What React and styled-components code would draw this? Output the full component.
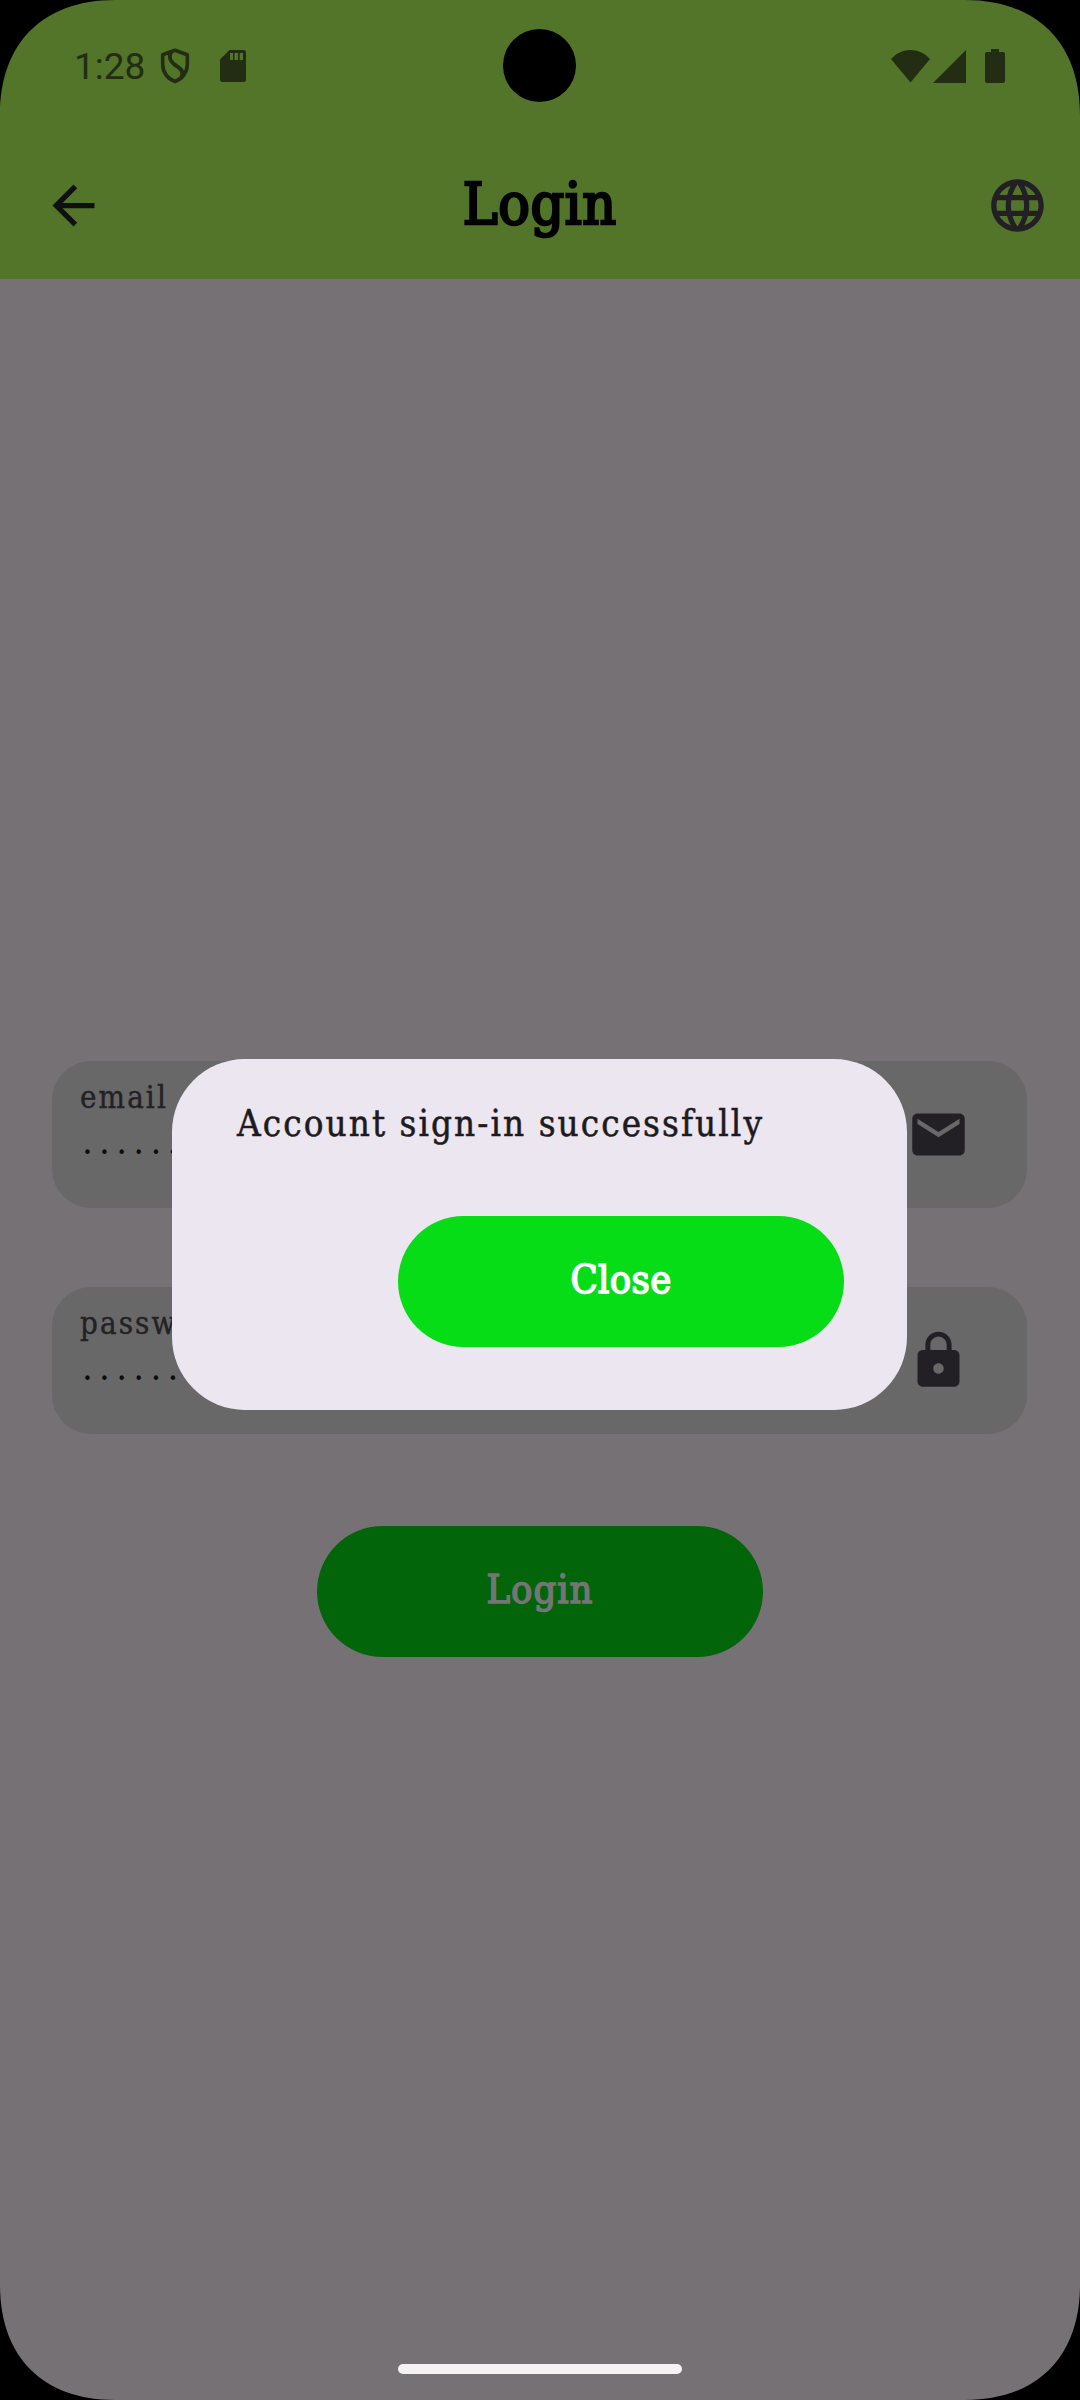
import React from "react";
import styled, { createGlobalStyle } from "styled-components";

const slab = `"DejaVu Serif Condensed", "DejaVu Serif", serif`;

const GlobalStyle = createGlobalStyle`
  * { box-sizing: border-box; }
  html, body { margin: 0; padding: 0; background: #000; }
`;

const Phone = styled.div`
  position: relative;
  display: flex;
  flex-direction: column;
  width: 1080px;
  height: 2400px;
  overflow: hidden;
  background: #767175;
  font-family: ${slab};
  font-stretch: condensed;
`;

const TopArea = styled.header`
  display: flex;
  flex-direction: column;
  height: 279px;
  background: #527529;
`;

const StatusBar = styled.div`
  display: flex;
  align-items: center;
  justify-content: space-between;
  height: 132px;
  padding: 0 75px 0 74px;
`;

const StatusGroup = styled.div`
  display: flex;
  align-items: center;
`;

const Clock = styled.span`
  width: 86px;
  padding-top: 1px;
  font: 400 37px/44px Roboto, sans-serif;
  color: #232d13;
`;

const Glyph = styled.svg`
  display: block;
  flex: none;
  width: ${(p) => p.$w}px;
  height: ${(p) => p.$h}px;
  margin-left: ${(p) => p.$gap || 0}px;
  fill: ${(p) => p.$color || "#232d13"};
`;

const Camera = styled.div`
  position: absolute;
  left: 503px;
  top: 29px;
  width: 73px;
  height: 73px;
  border-radius: 50%;
  background: #000;
`;

const AppBar = styled.div`
  display: grid;
  grid-template-columns: 63px 1fr 63px;
  align-items: center;
  height: 147px;
  padding: 0 31.5px 0 42px;
`;

const Title = styled.h1`
  margin: 0;
  padding: 0 11px 4px 0;
  text-align: center;
  font-size: 58.5px;
  line-height: 72px;
  font-weight: 400;
  letter-spacing: 0.6px;
  color: #000;
  -webkit-text-stroke: 2.6px #000;
`;

const Form = styled.main`
  display: flex;
  flex-direction: column;
  align-items: center;
  padding-top: 782px;
`;

const Field = styled.div`
  display: flex;
  justify-content: space-between;
  align-items: center;
  width: 975px;
  height: 147px;
  margin: 0 1px 79px 0;
  padding: 0 57.5px 0 28px;
  border-radius: 39px;
  background: #686868;
`;

const FieldText = styled.div`
  display: flex;
  flex-direction: column;
  height: 147px;
  padding-top: 16px;
`;

const Label = styled.label`
  font-size: 31px;
  line-height: 40px;
  letter-spacing: 2.1px;
  color: #232126;
  -webkit-text-stroke: 0.4px #232126;
`;

const Hidden = styled.span`
  margin-top: 20px;
  padding-left: 3px;
  font: 400 15px/32px "DejaVu Sans", sans-serif;
  letter-spacing: 8.25px;
  color: #0c0c0c;
`;

const PillButton = styled.button`
  display: flex;
  align-items: center;
  justify-content: center;
  width: 446px;
  height: 131px;
  margin: ${(p) => p.$margin || "0"};
  padding: 0 0 5px;
  border: 0;
  border-radius: 66px;
  background: ${(p) => p.$bg};
  color: ${(p) => p.$color};
  font-family: ${slab};
  font-stretch: condensed;
  font-size: 39.5px;
  line-height: 50px;
  letter-spacing: ${(p) => p.$spacing}px;
  -webkit-text-stroke: 1.5px ${(p) => p.$color};
`;

const Dialog = styled.section`
  position: absolute;
  left: 172px;
  top: 1059px;
  display: flex;
  flex-direction: column;
  align-items: flex-end;
  width: 735px;
  height: 351px;
  padding: 42px 63px 63px 65px;
  border-radius: 73px;
  background: #ece6f0;
`;

const Message = styled.p`
  width: 100%;
  height: 115px;
  margin: 0;
  font-size: 36.5px;
  line-height: 46px;
  letter-spacing: 2.05px;
  white-space: nowrap;
  color: #1d1b20;
  -webkit-text-stroke: 0.5px #1d1b20;
`;

const HomeIndicator = styled.div`
  position: absolute;
  left: 398px;
  top: 2364px;
  width: 284px;
  height: 10px;
  border-radius: 5px;
  background: #f3f3f3;
`;

const CornerShape = styled.svg`
  position: absolute;
  width: 115px;
  height: 115px;
  ${(p) => p.$y}: 0;
  ${(p) => p.$x}: 0;
  transform: scale(${(p) => (p.$x === "right" ? -1 : 1)}, ${(p) => (p.$y === "bottom" ? -1 : 1)});
`;

const Corner = ({ x, y }) => (
  <CornerShape $x={x} $y={y} viewBox="0 0 115 115">
    <path d="M0 0H115C43 0 0 43 0 115Z" />
  </CornerShape>
);

const ShieldIcon = () => (
  <Glyph $w={30} $h={36} viewBox="0 0 30 36" style={{ fill: "none" }}>
    <path d="M15 2.3 27.3 6.8V16.5C27.3 24.5 22 31 15 33.5 8 31 2.7 24.5 2.7 16.5V6.8Z" stroke="#232d13" strokeWidth="3.6" strokeLinejoin="round" />
    <path d="M11 4C8 10 10.5 13.5 15 17 21 21 24 22.5 21.5 29.5" stroke="#232d13" strokeWidth="4" />
  </Glyph>
);

const SdIcon = () => (
  <Glyph $w={26} $h={32} $gap={30} viewBox="0 0 26 32">
    <path fillRule="evenodd" d="M9.5 0H23.5Q26 0 26 2.5V29.5Q26 32 23.5 32H2.5Q0 32 0 29.5V9.5ZM10 3V10H13V3ZM14.5 3V10H18V3ZM19.7 3V10H23V3Z" />
  </Glyph>
);

const WifiIcon = () => (
  <Glyph $w={39} $h={33} viewBox="0 0 39 33">
    <path d="M0 9C11-3 28-3 39 9L19.5 32.5Z" />
  </Glyph>
);

const SignalIcon = () => (
  <Glyph $w={33} $h={33} $gap={3} viewBox="0 0 33 33">
    <path d="M33 0V33H0Z" />
  </Glyph>
);

const BatteryIcon = () => (
  <Glyph $w={20} $h={34} $gap={19} viewBox="0 0 20 34">
    <path d="M6 0H14V3H18Q20 3 20 5V32Q20 34 18 34H2Q0 34 0 32V5Q0 3 2 3H6Z" />
  </Glyph>
);

const MaterialIcon = ({ d, color = "#232025" }) => (
  <Glyph $w={63} $h={63} $color={color} viewBox="0 0 24 24">
    <path d={d} />
  </Glyph>
);

const paths = {
  back: "M20 11H7.83l5.59-5.59L12 4l-8 8 8 8 1.41-1.41L7.83 13H20v-2z",
  globe:
    "M11.99 2C6.47 2 2 6.48 2 12s4.47 10 9.99 10C17.52 22 22 17.52 22 12S17.52 2 11.99 2zm6.93 6h-2.95c-.32-1.25-.78-2.45-1.38-3.56 1.84.63 3.37 1.91 4.33 3.56zM12 4.04c.83 1.2 1.48 2.53 1.91 3.96h-3.82c.43-1.43 1.08-2.76 1.91-3.96zM4.26 14C4.1 13.36 4 12.69 4 12s.1-1.36.26-2h3.38c-.08.66-.14 1.32-.14 2 0 .68.06 1.34.14 2H4.26zm.82 2h2.95c.32 1.25.78 2.45 1.38 3.56-1.84-.63-3.37-1.9-4.33-3.56zm2.95-8H5.08c.96-1.66 2.49-2.93 4.33-3.56C8.81 5.55 8.35 6.75 8.03 8zM12 19.96c-.83-1.2-1.48-2.53-1.91-3.96h3.82c-.43 1.43-1.08 2.76-1.91 3.96zM14.34 14H9.66c-.09-.66-.16-1.32-.16-2 0-.68.07-1.35.16-2h4.68c.09.65.16 1.32.16 2 0 .68-.07 1.34-.16 2zm.25 5.56c.6-1.11 1.06-2.31 1.38-3.56h2.95c-.96 1.65-2.49 2.93-4.33 3.56zM16.36 14c.08-.66.14-1.32.14-2 0-.68-.06-1.34-.14-2h3.38c.16.64.26 1.31.26 2s-.1 1.36-.26 2h-3.38z",
  mail: "M20 4H4c-1.1 0-1.99.9-1.99 2L2 18c0 1.1.9 2 2 2h16c1.1 0 2-.9 2-2V6c0-1.1-.9-2-2-2zm0 4l-8 5-8-5V6l8 5 8-5v2z",
  lock: "M18 8h-1V6c0-2.76-2.24-5-5-5S7 3.24 7 6v2H6c-1.1 0-2 .9-2 2v10c0 1.1.9 2 2 2h12c1.1 0 2-.9 2-2V10c0-1.1-.9-2-2-2zm-6 9c-1.1 0-2-.9-2-2s.9-2 2-2 2 .9 2 2-.9 2-2 2zm3.1-9H8.9V6c0-1.71 1.39-3.1 3.1-3.1 1.71 0 3.1 1.39 3.1 3.1v2z",
};

const InputField = ({ label, value, icon }) => (
  <Field>
    <FieldText>
      <Label>{label}</Label>
      <Hidden>{value}</Hidden>
    </FieldText>
    <MaterialIcon d={icon} />
  </Field>
);

export default function App() {
  return (
    <Phone>
      <GlobalStyle />
      <TopArea>
        <StatusBar>
          <StatusGroup>
            <Clock>1:28</Clock>
            <ShieldIcon />
            <SdIcon />
          </StatusGroup>
          <StatusGroup>
            <WifiIcon />
            <SignalIcon />
            <BatteryIcon />
          </StatusGroup>
        </StatusBar>
        <AppBar>
          <MaterialIcon d={paths.back} color="#101010" />
          <Title>Login</Title>
          <MaterialIcon d={paths.globe} />
        </AppBar>
      </TopArea>
      <Form>
        <InputField label="email" value="••••••" icon={paths.mail} />
        <InputField label="password" value="••••••" icon={paths.lock} />
        <PillButton $bg="#02650a" $color="#757575" $spacing={1} $margin="13px 0 0">
          Login
        </PillButton>
      </Form>
      <Dialog role="dialog">
        <Message>Account sign-in successfully</Message>
        <PillButton $bg="#06dd17" $color="#fff" $spacing={0.4}>
          Close
        </PillButton>
      </Dialog>
      <Camera />
      <HomeIndicator />
      <Corner x="left" y="top" />
      <Corner x="right" y="top" />
      <Corner x="left" y="bottom" />
      <Corner x="right" y="bottom" />
    </Phone>
  );
}
